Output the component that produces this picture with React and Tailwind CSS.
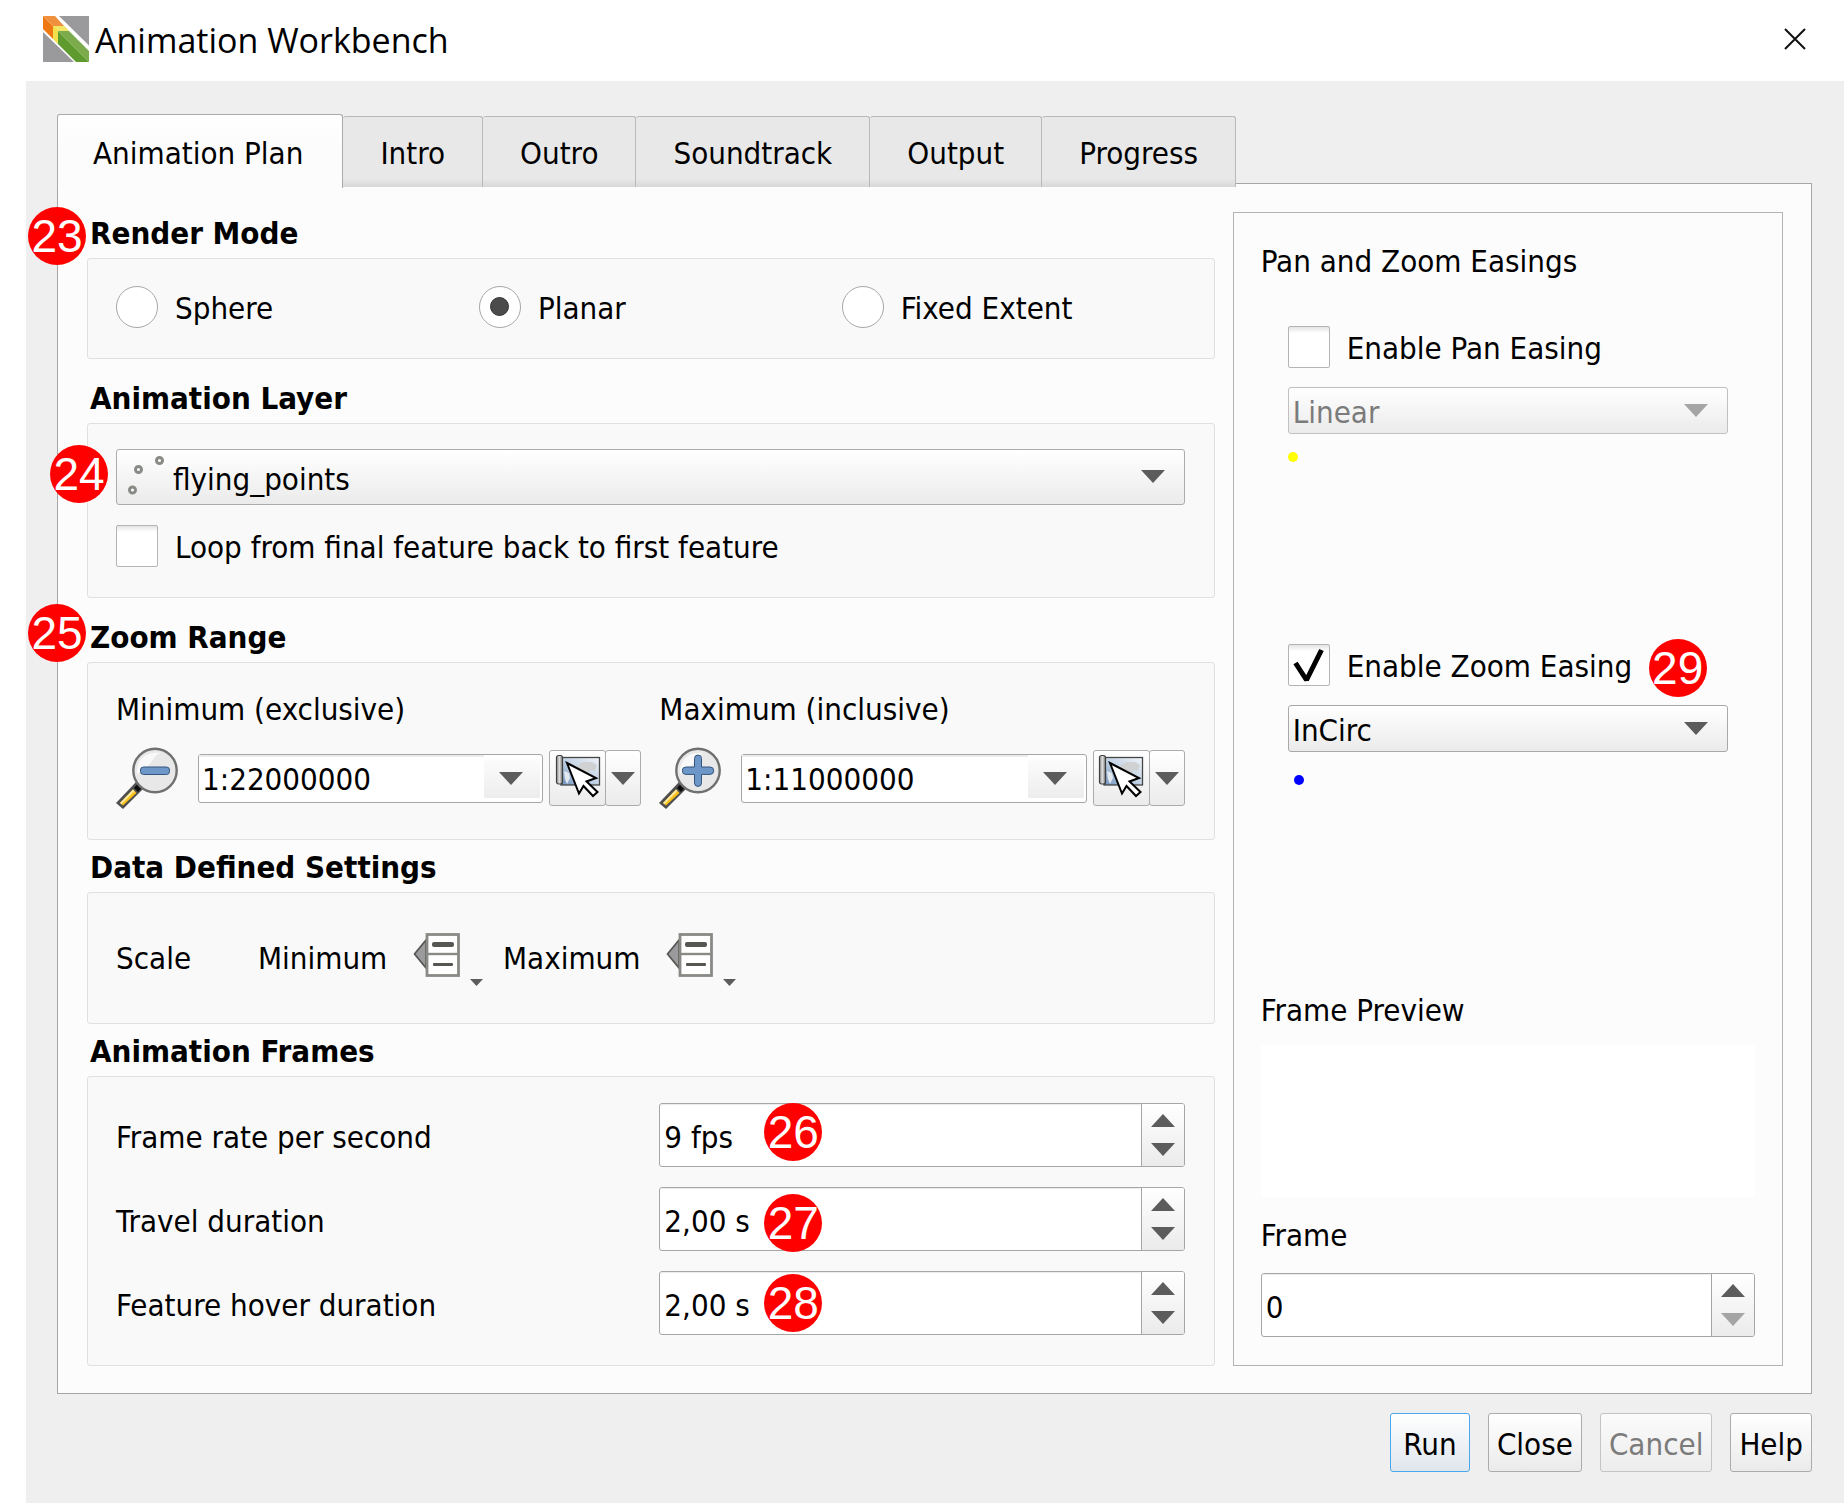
import React from 'react';

const ui = 'font-["DejaVu_Sans_Condensed","Noto_Sans",sans-serif]';
const buttonFace = 'border border-[#acacac] rounded-[3px] bg-linear-to-b from-white to-[#ebebeb]';

function Arrow({ up = false, dim = false, className = '' }) {
  return (
    <svg
      className={className}
      width="24"
      height="13"
      viewBox="0 0 24 13"
      fill={dim ? '#a5a5a5' : '#5c5c5c'}
      aria-hidden="true"
    >
      <path d={up ? 'M0 13L12 0L24 13Z' : 'M0 0L12 13L24 0Z'} />
    </svg>
  );
}

function Badge({ n, className }) {
  return (
    <span
      className={`absolute z-20 flex size-[58px] items-center justify-center rounded-full bg-[#ff0000] font-["Liberation_Sans",sans-serif] text-[46px] font-normal leading-[58px] text-white ${className}`}
    >
      {n}
    </span>
  );
}

function Logo() {
  return (
    <svg width="46" height="46" viewBox="0 0 46 46" aria-hidden="true">
      <path d="M16 0H46V29.5Z" fill="#9a9a9c" />
      <path d="M0 16V46H31Z" fill="#9a9a9c" />
      <path d="M0 0L10 10V23L0 13Z" fill="#ee7913" />
      <path d="M0 0H12L21 10H10Z" fill="#f08f3c" />
      <path d="M10 10H21L26 15H15V28L10 23Z" fill="#f1e04a" />
      <path d="M10 10H21L26 15H15Z" fill="#f3e666" />
      <path d="M15 15H26L46 35V46Z" fill="#7cab4c" />
      <path d="M15 15L46 46H33L15 28Z" fill="#5f9a2f" />
    </svg>
  );
}

function Magnifier({ plus = false }) {
  return (
    <svg className="shrink-0" width="62" height="62" viewBox="0 0 62 62" aria-hidden="true">
      <path d="M0 56L21 34L28 41L7 62Z" fill="#4f4f4f" />
      <path d="M4 56L17 42.500L20.500 46L7 58.500Z" fill="#fcc21b" />
      <path d="M4 56L17 42.500L18.500 44L5.500 57.300Z" fill="#fde9a0" />
      <path d="M18 41L22 36.500L26 40.500L22 45Z" fill="#0d0d0d" />
      <circle cx="39" cy="23.500" r="21.700" fill="#e8e8e8" stroke="#6f716f" strokeWidth="2.400" />
      <path d="M21 27C20 13 30 4 44 6C36 9 38 18 21 27Z" fill="#f8f9f8" />
      {plus ? (
        <path
          d="M35.500 11.500a3.500 3.500 0 0 1 7 0V20h8.500a3.500 3.500 0 0 1 0 7.400h-8.500v8.500a3.500 3.500 0 0 1-7 0v-8.500H27a3.500 3.500 0 0 1 0-7.400h8.500Z"
          fill="#6d97c8"
          stroke="#34557d"
        />
      ) : (
        <rect x="24.500" y="20" width="29" height="7.500" rx="3" fill="#6d97c8" stroke="#34557d" />
      )}
    </svg>
  );
}

function MapCursor() {
  return (
    <svg width="46" height="44" viewBox="0 0 46 44" aria-hidden="true">
      <defs>
        <linearGradient id="sea" x1="0" y1="1" x2="1" y2="0">
          <stop offset="0" stopColor="#6f93bd" />
          <stop offset="0.500" stopColor="#c3d3e6" />
          <stop offset="1" stopColor="#f1f4f8" />
        </linearGradient>
        <linearGradient id="roll" x1="0" x2="1">
          <stop offset="0" stopColor="#8d8f8c" />
          <stop offset="0.500" stopColor="#dcdcdc" />
          <stop offset="1" stopColor="#777" />
        </linearGradient>
      </defs>
      <rect x="6" y="3.500" width="38.500" height="27.500" fill="url(#sea)" stroke="#454745" strokeWidth="1.300" />
      <path d="M22 12L28 8L37 8L42 11L40 17L36 16L33 20L28 17Z" fill="#cfd1d3" />
      <path d="M9 17L14 19L15 24L12 30L10 25Z" fill="#e3e8ee" />
      <rect x="1.500" y="1.500" width="6" height="28.500" rx="2" fill="url(#roll)" stroke="#3f413f" strokeWidth="1.200" />
      <path
        d="M12 9L41 24L31.500 27.500L42.500 38L38 42L28.500 32L24 39.500Z"
        fill="#fff"
        stroke="#000"
        strokeWidth="2"
      />
    </svg>
  );
}

function DataDefinedIcon() {
  return (
    <svg width="70" height="54" viewBox="0 0 70 54" aria-hidden="true">
      <path d="M13 7L1.500 21L13 35Z" fill="#9b9b9e" stroke="#555753" strokeWidth="1.800" strokeLinejoin="round" />
      <rect x="14" y="1.500" width="31.500" height="41" fill="#fff" stroke="#888a85" strokeWidth="2.800" />
      <path d="M14 21H46" stroke="#888a85" strokeWidth="2.400" />
      <rect x="19" y="9" width="22" height="5" rx="2" fill="#555753" />
      <rect x="20" y="30" width="20" height="3" rx="1" fill="#555753" />
      <path d="M57 46H70L63.500 53Z" fill="#5c5c5c" />
    </svg>
  );
}

function Group({ title, badge, badgeClass = '', className = '', children }) {
  return (
    <section>
      <h2 className="relative pb-2.5 pl-[3px] text-[31px] font-bold leading-[30px]">
        {badge && <Badge n={badge} className={`-left-[59px] ${badgeClass}`} />}
        {title}
      </h2>
      <div className={`rounded-[3px] border border-[#e0e0e0] bg-[#f9f9f9] pl-7 pr-[29px] ${className}`}>{children}</div>
    </section>
  );
}

function Radio({ label, ...rest }) {
  return (
    <label className="flex items-center gap-[17px]">
      <input
        type="radio"
        name="render-mode"
        className="flex size-[42px] appearance-none items-center justify-center rounded-full border border-[#a8a8a8] bg-white checked:before:size-[19px] checked:before:rounded-full checked:before:border checked:before:border-[#333] checked:before:bg-[#4b4b4b] checked:before:content-['']"
        {...rest}
      />
      <span className="pt-[3px]">{label}</span>
    </label>
  );
}

function Check({ label, ...rest }) {
  return (
    <label className="flex items-center gap-[17px]">
      <span className="relative size-[42px] shrink-0">
        <input
          type="checkbox"
          className="peer block size-[42px] appearance-none rounded-[2px] border border-[#b4b4b4] bg-white bg-linear-to-b from-[#e4e4e4] to-white to-15%"
          {...rest}
        />
        <svg
          className="pointer-events-none absolute left-0 top-0 hidden peer-checked:block"
          width="42"
          height="42"
          viewBox="0 0 42 42"
          aria-hidden="true"
        >
          <path d="M7.500 19L18.500 36L33.500 6" fill="none" stroke="#000" strokeWidth="5" strokeLinejoin="bevel" />
        </svg>
      </span>
      <span className="whitespace-nowrap pt-[3px]">{label}</span>
    </label>
  );
}

function Spin({ id, value, badge, badgeClass, downDim }) {
  return (
    <div className="relative flex h-16 overflow-visible rounded-[3px] border border-[#a6a6a6] bg-white">
      <input
        id={id}
        defaultValue={value}
        className="min-w-0 flex-1 rounded-[3px] border-t border-[#ececec] bg-transparent pl-1 pt-[3px] outline-none"
      />
      <div className="flex w-[43px] flex-col items-center justify-center gap-4 rounded-r-[2px] border-l border-[#a6a6a6] bg-linear-to-b from-white to-[#ebebeb]">
        <button type="button" aria-label="Increase">
          <Arrow up />
        </button>
        <button type="button" aria-label="Decrease" disabled={downDim}>
          <Arrow dim={downDim} />
        </button>
      </div>
      {badge && <Badge n={badge} className={`left-[104px] ${badgeClass}`} />}
    </div>
  );
}

function Scale({ id, label, value, plus }) {
  return (
    <div>
      <label htmlFor={id} className="block leading-10">
        {label}
      </label>
      <div className="mt-[18px] flex items-center">
        <Magnifier plus={plus} />
        <div className="relative ml-5 flex h-[49px] min-w-0 flex-1 rounded-[3px] border border-[#a6a6a6] bg-white">
          <input
            id={id}
            defaultValue={value}
            className="min-w-0 flex-1 border-t-2 border-[#ececec] bg-transparent pl-[3px] outline-none"
          />
          <button
            type="button"
            aria-label="Choose scale"
            className="my-1 mr-0.5 flex w-14 items-center justify-center bg-linear-to-b from-[#fcfcfc] to-[#ededed] pr-0.5"
          >
            <Arrow />
          </button>
        </div>
        <button
          type="button"
          aria-label="Set to current map canvas scale"
          className={`ml-1.5 flex h-14 w-[57px] shrink-0 items-center justify-center pb-1 ${buttonFace}`}
        >
          <MapCursor />
        </button>
        <button
          type="button"
          aria-label="More scale options"
          className={`-ml-px flex h-14 w-9 shrink-0 items-center justify-center ${buttonFace}`}
        >
          <Arrow />
        </button>
      </div>
    </div>
  );
}

function Easing({ label, value, enabled, dotClass, badge }) {
  return (
    <div className="ml-[27px] mr-[27px] h-[318px]">
      <div className="relative">
        <Check label={label} defaultChecked={enabled} />
        {badge && <Badge n={badge} className="-top-1 left-[361px]" />}
      </div>
      <div className="relative mt-[19px]">
        <select
          aria-label={`${label} curve`}
          disabled={!enabled}
          className="block h-[47px] w-full appearance-none rounded-[3px] border border-[#a9a9a9] bg-linear-to-b from-white to-[#ebebeb] pl-1 pt-[3px] text-black opacity-100 outline-none disabled:border-[#c0c0c0] disabled:text-[#7b7b7b]"
        >
          <option>{value}</option>
        </select>
        <Arrow dim={!enabled} className="pointer-events-none absolute right-5 top-[17px]" />
      </div>
      <div className={`size-2.5 rounded-full ${dotClass}`} />
    </div>
  );
}

const tabs = ['Animation Plan', 'Intro', 'Outro', 'Soundtrack', 'Output', 'Progress'];

export default function App() {
  return (
    <div className={`bg-white pb-0.5 text-[31px] leading-10 text-black ${ui}`}>
      <header className="flex h-[81px] items-center pb-1 pl-[43px] pr-[39px]">
        <div className="flex flex-1 items-center gap-1.5">
          <Logo />
          <h1 className='pt-0.5 font-["Open_Sans","Noto_Sans",sans-serif] text-[34px]'>Animation Workbench</h1>
        </div>
        <button type="button" aria-label="Close window">
          <svg width="22" height="22" viewBox="0 0 22 22" stroke="#111" strokeWidth="2" aria-hidden="true">
            <path d="M1 1L21 21M21 1L1 21" />
          </svg>
        </button>
      </header>

      <main className="ml-[26px] mr-px bg-[#efefef] pb-[31px] pl-[31px] pr-8 pt-[33px]">
        <div role="tablist" className="relative z-10 -mb-[5px] flex items-end">
          {tabs.map((t, i) => (
            <button
              key={t}
              type="button"
              role="tab"
              aria-selected={i === 0}
              className={
                i === 0
                  ? 'h-[74px] whitespace-nowrap rounded-t-[3px] border border-b-0 border-[#ababab] bg-linear-to-b from-white to-[#fcfcfc] to-40% pl-[35px] pr-[39px] pt-0.5'
                  : 'mb-px h-[71px] whitespace-nowrap rounded-t-[3px] border-r border-t border-[#b9b9b9] bg-linear-to-b from-[#e8e8e8] from-88% to-[#d8d8d8] px-[37px] pt-0.5'
              }
            >
              {t}
            </button>
          ))}
        </div>

        <div
          role="tabpanel"
          className="grid grid-cols-[minmax(0,1127fr)_minmax(0,550fr)] gap-[18px] border border-[#a6a6a6] bg-[#fcfcfc] pb-[27px] pl-[29px] pr-7 pt-7"
        >
          <div className="pt-1.5">
            <Group title="Render Mode" badge="23" badgeClass="-top-[11px]" className="pb-[30px] pt-[26px]">
              <div className="grid grid-cols-3 gap-5">
                <Radio label="Sphere" />
                <Radio label="Planar" defaultChecked />
                <Radio label="Fixed Extent" />
              </div>
            </Group>

            <div className="h-6" />
            <Group title="Animation Layer" className="pb-[30px] pt-[25px]">
              <div className="relative">
                <select
                  aria-label="Animation layer"
                  className={`block h-14 w-full appearance-none pl-14 pt-[3px] outline-none ${buttonFace}`}
                >
                  <option>flying_points</option>
                </select>
                <svg
                  className="pointer-events-none absolute left-3 top-1.5"
                  width="38"
                  height="42"
                  viewBox="0 0 38 42"
                  fill="#fff"
                  stroke="#888a85"
                  strokeWidth="3"
                  aria-hidden="true"
                >
                  <circle cx="4.500" cy="35" r="3" />
                  <circle cx="10.500" cy="14.500" r="3" />
                  <circle cx="31.500" cy="5.500" r="3" />
                </svg>
                <Arrow className="pointer-events-none absolute right-5 top-[21px]" />
                <Badge n="24" className="-left-[66px] -top-1" />
              </div>
              <div className="mt-[19px]">
                <Check label="Loop from final feature back to first feature" />
              </div>
            </Group>

            <div className="h-6" />
            <Group title="Zoom Range" badge="25" badgeClass="-top-[18px]" className="pb-[30px] pt-[26px]">
              <div className="grid grid-cols-2 gap-[18px]">
                <Scale id="min-scale" label="Minimum (exclusive)" value="1:22000000" />
                <Scale id="max-scale" label="Maximum (inclusive)" value="1:11000000" plus />
              </div>
            </Group>

            <div className="h-3" />
            <Group title="Data Defined Settings" className="flex h-[132px] items-center">
              <span className="w-[142px]">Scale</span>
              <span className="w-[155px]">Minimum</span>
              <button type="button" aria-label="Minimum data defined override" className="w-[90px] pt-1">
                <DataDefinedIcon />
              </button>
              <span className="w-[163px]">Maximum</span>
              <button type="button" aria-label="Maximum data defined override" className="pt-1">
                <DataDefinedIcon />
              </button>
            </Group>

            <div className="h-3" />
            <Group title="Animation Frames" className="pb-[30px] pt-[26px]">
              <div className="grid grid-cols-2 items-center gap-x-[18px] gap-y-5">
                <label htmlFor="fps" className="pt-[3px]">
                  Frame rate per second
                </label>
                <Spin id="fps" value="9 fps" badge="26" badgeClass="-top-px" />
                <label htmlFor="travel" className="pt-[3px]">
                  Travel duration
                </label>
                <Spin id="travel" value="2,00 s" badge="27" badgeClass="top-1.5" />
                <label htmlFor="hover" className="pt-[3px]">
                  Feature hover duration
                </label>
                <Spin id="hover" value="2,00 s" badge="28" badgeClass="top-0.5" />
              </div>
            </Group>
          </div>

          <aside className="flex flex-col border border-[#b4b4b4] px-[27px] pb-7 pt-7">
            <h3 className="mb-11">Pan and Zoom Easings</h3>
            <Easing label="Enable Pan Easing" value="Linear" dotClass="mt-[18px] bg-[#ffff00]" />
            <Easing
              label="Enable Zoom Easing"
              value="InCirc"
              enabled
              badge="29"
              dotClass="ml-1.5 mt-[23px] bg-[#0000ff]"
            />
            <div className="mt-auto">
              <h3>Frame Preview</h3>
              <div className="mt-4 h-[151px] bg-white" />
              <label htmlFor="frame" className="mb-[18px] mt-[18px] block">
                Frame
              </label>
              <Spin id="frame" value="0" downDim />
            </div>
          </aside>
        </div>

        <footer className="mt-[19px] flex justify-end gap-[18px]">
          <button
            type="button"
            className="h-[59px] min-w-20 rounded-[3px] border border-[#4aa9ee] bg-linear-to-b from-white to-[#e0e6ec] px-2 pt-0.5"
          >
            Run
          </button>
          <button type="button" className={`h-[59px] px-2 pt-0.5 ${buttonFace}`}>
            Close
          </button>
          <button
            type="button"
            disabled
            className="h-[59px] rounded-[3px] border border-[#c4c4c4] bg-linear-to-b from-[#fbfbfb] to-[#ececec] px-2 pt-0.5 text-[#7b7b7b]"
          >
            Cancel
          </button>
          <button type="button" className={`h-[59px] px-2 pt-0.5 ${buttonFace}`}>
            Help
          </button>
        </footer>
      </main>
    </div>
  );
}
